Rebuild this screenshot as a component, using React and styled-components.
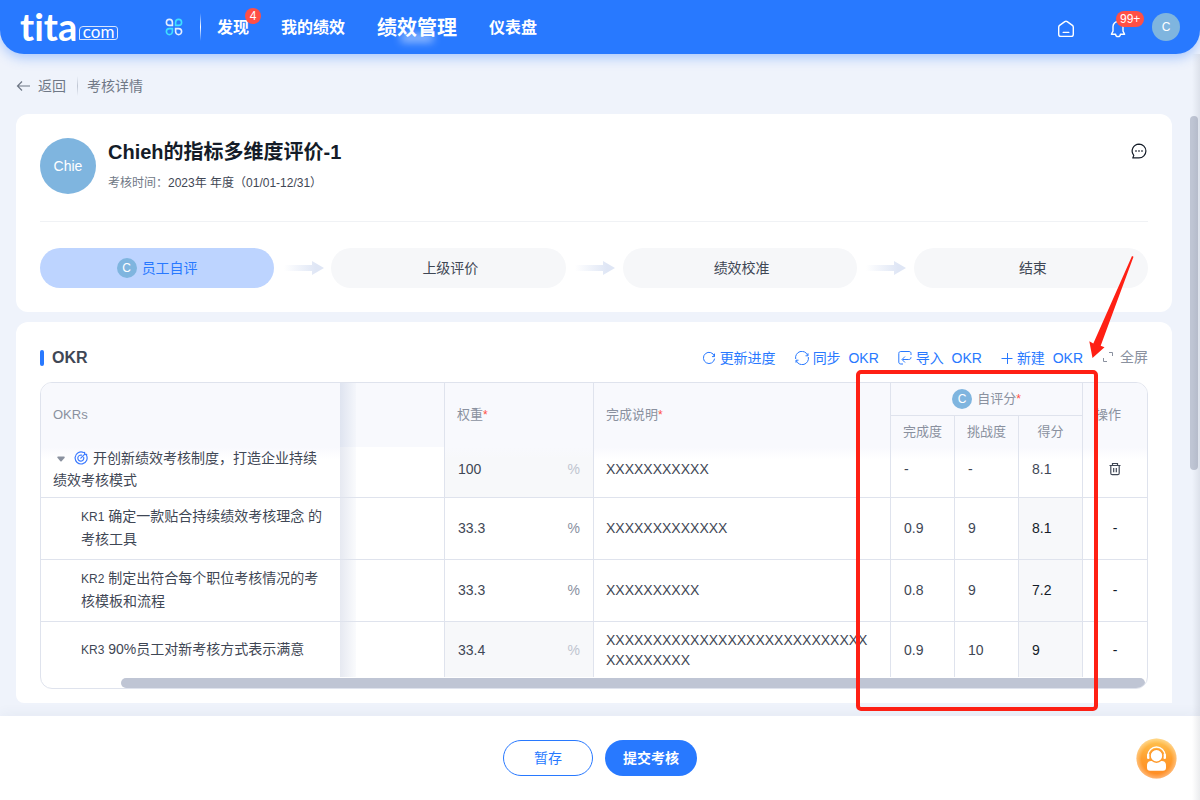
import React from 'react'
import styled, { createGlobalStyle, css } from 'styled-components'

const GlobalStyle = createGlobalStyle`
    * {
        box-sizing: border-box;
    }

    body {
        margin: 0;
        background: #eff3fb;
        color: #3f4755;
        font-family: "Liberation Sans", "Noto Sans CJK SC", sans-serif;
        font-size: 14px;
        line-height: 22px;
    }

    button, input {
        font: inherit;
        color: inherit;
    }

    button {
        padding: 0;
        border: 0;
        background: none;
        cursor: pointer;
    }

    a {
        color: inherit;
        text-decoration: none;
    }

    svg {
        display: block;
        flex: none;
    }
`

const Page = styled.div`
    position: relative;
    min-height: 100vh;
    display: flex;
    flex-direction: column;
`

const EdgeShade = styled.div`
    position: absolute;
    top: 54px;
    right: 0;
    bottom: 0;
    width: 8px;
    background: linear-gradient(to right, rgba(60, 70, 90, 0), rgba(60, 70, 90, 0.1));
    pointer-events: none;
`

const TopBar = styled.header`
    height: 54px;
    padding: 0 20px;
    display: flex;
    align-items: center;
    justify-content: space-between;
    background: #2879ff;
    border-radius: 0 0 24px 24px;
    box-shadow: 0 4px 12px rgba(40, 121, 255, 0.35);
    color: #fff;
    z-index: 1;
`

const Logo = styled.a`
    width: 98px;
    height: 26px;
    margin-right: 47px;
    display: flex;
    align-items: flex-end;
    gap: 2px;
`

const LogoName = styled.span`
    font-family: Lato, sans-serif;
    font-size: 38px;
    font-weight: 700;
    font-variant-ligatures: none;
    line-height: 28px;
`

const LogoDomain = styled.span`
    flex: 1;
    height: 14px;
    border: 1px solid #d5e4ff;
    border-radius: 4px 3px 3px 0;
    font-family: Lato, sans-serif;
    font-size: 17px;
    line-height: 9px;
    text-align: center;
`

const TopGroup = styled.div`
    display: flex;
    align-items: center;
`

const TopDivider = styled.span`
    width: 1px;
    height: 28px;
    margin: 0 16px 0 17px;
    background: linear-gradient(rgba(255, 255, 255, 0), #fff, rgba(255, 255, 255, 0));
`

const Nav = styled.nav`
    padding-top: 2px;
    display: flex;
    align-items: center;
    gap: 32px;
`

const NavLink = styled.a`
    position: relative;
    font-size: ${props => props.$active ? '20px' : '16px'};
    font-weight: 700;
    line-height: 28px;

    ${props => props.$active && css`
        &::after {
            content: "";
            position: absolute;
            left: 24px;
            bottom: 0;
            width: 32px;
            height: 8px;
            background: rgba(255, 255, 255, 0.55);
            filter: blur(4px);
        }
    `}
`

const Badge = styled.span`
    position: absolute;
    left: ${props => props.$left};
    top: -6px;
    min-width: 16px;
    height: 16px;
    padding: 0 4px;
    border-radius: 8px;
    background: #ff4f45;
    color: #fff;
    font-size: 12px;
    font-weight: 400;
    line-height: 16px;
    text-align: center;
`

const TopButton = styled.button`
    position: relative;
    margin-right: ${props => props.$gap};
    padding-top: 3px;
`

const Avatar = styled.span`
    width: ${props => props.$size};
    height: ${props => props.$size};
    flex: none;
    display: inline-flex;
    align-items: center;
    justify-content: center;
    border-radius: 50%;
    background: #7fb5df;
    color: #fff;
    font-size: ${props => props.$font || '12px'};
`

const Main = styled.main`
    position: relative;
    flex: 1;
    padding: 0 28px 12px 16px;
`

const PageThumb = styled.div`
    position: absolute;
    top: 62px;
    right: 2px;
    width: 8px;
    height: 354px;
    border-radius: 4px;
    background: #bfc5d4;
`

const Crumbs = styled.div`
    height: 60px;
    padding-top: 4px;
    display: flex;
    align-items: center;
    color: #6f7886;
`

const BackButton = styled.button`
    display: flex;
    align-items: center;
    gap: 7px;
`

const CrumbDivider = styled.span`
    width: 1px;
    height: 20px;
    margin: 0 9px 0 11px;
    background: linear-gradient(rgba(190, 197, 210, 0), #bec5d2, rgba(190, 197, 210, 0));
`

const Card = styled.section`
    position: relative;
    padding: 24px;
    border-radius: 12px;
    background: #fff;
`

const OkrCard = styled(Card)`
    margin-top: 10px;
    padding: 24px 24px 14px;
    border-radius: 12px 12px 0 8px;
`

const Summary = styled.div`
    height: 84px;
    display: flex;
    align-items: flex-start;
    gap: 12px;
    border-bottom: 1px solid #f0f2f5;
`

const SummaryText = styled.div`
    flex: 1;
`

const Title = styled.h1`
    margin: 0;
    color: #141c28;
    font-size: 20px;
    font-weight: 700;
    line-height: 28px;
`

const Period = styled.div`
    margin-top: 7px;
    font-size: 12px;
    line-height: 20px;

    span {
        color: #6f7886;
    }
`

const CommentButton = styled.button`
    margin-top: 5px;
    color: #141c28;
`

const Steps = styled.div`
    margin-top: 26px;
    display: flex;
    align-items: center;
`

const Step = styled.div`
    flex: 1 1 20px;
    height: 40px;
    padding-left: ${props => props.$active ? '0' : '4px'};
    display: flex;
    align-items: center;
    justify-content: center;
    gap: 5px;
    border-radius: 20px;
    background: ${props => props.$active ? '#bdd4ff' : '#f6f7f9'};
    color: ${props => props.$active ? '#2879ff' : '#3f4755'};
`

const StepArrow = styled.div`
    width: 57px;
    display: flex;
    justify-content: center;
`

const OkrHead = styled.div`
    height: 36px;
    display: flex;
    justify-content: space-between;
`

const OkrTitle = styled.h2`
    margin: 0;
    height: 24px;
    display: flex;
    align-items: center;
    gap: 8px;
    font-size: 16px;
    font-weight: 700;

    &::before {
        content: "";
        width: 4px;
        height: 16px;
        border-radius: 2px;
        background: #2879ff;
    }
`

const Tools = styled.div`
    display: flex;
    align-items: flex-start;
`

const Tool = styled.button`
    height: 22px;
    margin: 1px 19px 0 0;
    display: flex;
    align-items: center;
    gap: 4px;
    color: #2879ff;
    white-space: pre;
`

const FullScreen = styled(Tool)`
    margin: 0;
    gap: 6px;
    color: #8a919f;
`

const TableFrame = styled.div`
    border: 1px solid #dfe3ed;
    border-radius: 12px;
    overflow: hidden;
`

const Table = styled.table`
    width: 100%;
    table-layout: fixed;
    border-collapse: separate;
    border-spacing: 0;
`

const Head = styled.th`
    height: ${props => props.$height || 'auto'};
    padding: 0 12px;
    background: #f8f9fd;
    border-right: ${props => props.$open ? '0' : '1px solid #dfe3ed'};
    border-bottom: ${props => props.$line ? '1px solid #dfe3ed' : '0'};
    color: #8a919f;
    font-size: 13px;
    font-weight: 400;
    text-align: ${props => props.$center ? 'center' : 'left'};

    i {
        color: #ff4f45;
        font-style: normal;
        font-size: 12px;
    }
`

const HeadPerson = styled.span`
    display: flex;
    align-items: center;
    justify-content: center;
    gap: 5px;
`

const ShadeHead = styled(Head)`
    background: linear-gradient(to right, #dfe4f0, #f4f6fb 16px, #f8f9fd 16px);
`

const Row = styled.tr`
    height: ${props => props.$height};

    td {
        padding-bottom: ${props => props.$shift || '2px'};
        border-bottom: ${props => props.$last ? '0' : '1px solid #dfe3ed'};
    }

    td:not(:nth-child(2)) {
        background-image: ${props => props.$fade ? 'linear-gradient(#f8f9fd, rgba(255, 255, 255, 0) 12px)' : 'none'};
    }
`

const Cell = styled.td`
    padding: 0 13px;
    background-color: ${props => props.$muted ? '#f7f8fa' : '#fff'};
    border-right: ${props => props.$open ? '0' : '1px solid #dfe3ed'};
    color: ${props => props.$strong ? '#141c28' : '#3f4755'};
    text-align: ${props => props.$center ? 'center' : 'left'};
    word-break: break-all;
    line-height: 20px;
`

const ShadeCell = styled(Cell)`
    background-image: linear-gradient(to right, #e6e9f1, #fafbfd 16px, #fff 16px);
`

const NoteCell = styled(Cell)`
    padding-left: 12px;
    padding-right: 18px;
`

const ObjectiveCell = styled(Cell)`
    padding-left: 12px;
`

const Objective = styled.div`
    line-height: 22px;

    svg {
        display: inline-block;
        vertical-align: middle;
    }
`

const Caret = styled.button`
    margin: 0 9px 0 4px;
`

const TargetIcon = styled.svg`
    margin: 0 5px 2px 0;
`

const KeyResult = styled.div`
    padding: 0 0 0 27px;
    line-height: 23px;

    small {
        font-size: 12px;
        line-height: 12px;
    }
`

const DeleteButton = styled.button`
    display: block;
    margin: 0 auto;
`

const Field = styled.label`
    display: flex;
    align-items: center;
    color: ${props => props.$muted ? '#bfc5d0' : '#8a919f'};
`

const Input = styled.input`
    display: block;
    flex: 1;
    min-width: 0;
    width: 100%;
    height: 20px;
    padding: 0;
    border: 0;
    outline: 0;
    background: transparent;
    color: #3f4755;
`

const TableBar = styled.div`
    height: 11px;
    padding: 1px 2px 0 80px;

    &::before {
        content: "";
        display: block;
        height: 10px;
        border-radius: 5px;
        background: #bfc5d4;
    }
`

const MarkBox = styled.div`
    position: absolute;
    top: 48px;
    right: 74px;
    width: 242px;
    height: 341px;
    border: 4px solid #ff2014;
    border-radius: 5px;
    pointer-events: none;
`

const MarkArrow = styled.svg`
    position: absolute;
    top: -68px;
    right: 36px;
    pointer-events: none;
`

const Footer = styled.footer`
    position: relative;
    height: 84px;
    display: flex;
    align-items: center;
    justify-content: center;
    gap: 12px;
    background: #fff;
    box-shadow: 0 -2px 12px rgba(60, 80, 120, 0.06);
`

const SaveButton = styled.button`
    width: 90px;
    height: 36px;
    border: 1px solid #2879ff;
    border-radius: 18px;
    color: #2879ff;
`

const SubmitButton = styled.button`
    width: 92px;
    height: 36px;
    border-radius: 18px;
    background: #2879ff;
    color: #fff;
    font-weight: 700;
`

const ServiceButton = styled.button`
    position: absolute;
    right: 23px;
    top: 22px;
`

const steps = ['员工自评', '上级评价', '绩效校准', '结束']

const keyResults = [
    { label: 'KR1', text: '确定一款贴合持续绩效考核理念 的考核工具', weight: '33.3', note: 'XXXXXXXXXXXXX', done: '0.9', challenge: '9', score: '8.1' },
    { label: 'KR2', text: '制定出符合每个职位考核情况的考核模板和流程', weight: '33.3', note: 'XXXXXXXXXX', done: '0.8', challenge: '9', score: '7.2' },
    { label: 'KR3', text: '90%员工对新考核方式表示满意', weight: '33.4', note: 'X'.repeat(37), done: '0.9', challenge: '10', score: '9', locked: true }
]

function AppsIcon() {
    return (
        <svg width="18" height="18" viewBox="0 0 18 18" fill="none" strokeWidth="1.6">
            <path d="M4.4 1.4a3 3 0 0 1 3 3v3h-3a3 3 0 0 1 0-6z" stroke="#e4eeff" />
            <path d="M13.6 1.4a3 3 0 0 0-3 3v3h3a3 3 0 0 0 0-6z" stroke="#3fe0ff" />
            <path d="M4.4 16.6a3 3 0 0 0 3-3v-3h-3a3 3 0 0 0 0 6z" stroke="#3fe0ff" />
            <path d="M13.6 16.6a3 3 0 0 1-3-3v-3h3a3 3 0 0 1 0 6z" stroke="#e4eeff" />
        </svg>
    )
}

function HomeIcon() {
    return (
        <svg width="18" height="18" viewBox="0 0 18 18" fill="none" stroke="#fff" strokeWidth="1.4" strokeLinecap="round" strokeLinejoin="round">
            <path d="M1.7 7.2c0-.8.3-1.3.9-1.8L7.8 1.6c.8-.5 1.6-.5 2.4 0l5.2 3.8c.6.5.9 1 .9 1.8v7c0 1.4-.8 2.2-2.2 2.2H3.9c-1.4 0-2.2-.8-2.2-2.2z" />
            <path d="M6.2 12.4h5.6" />
        </svg>
    )
}

function BellIcon() {
    return (
        <svg width="16" height="18" viewBox="0 0 16 18" fill="none" stroke="#fff" strokeWidth="1.4" strokeLinecap="round" strokeLinejoin="round">
            <path d="M8 1.5a5 5 0 0 0-5 5v4.6L1.4 14.2h4.2a2.4 2.4 0 0 0 4.8 0h4.2L13 11.1V6.5a5 5 0 0 0-5-5z" />
        </svg>
    )
}

function RefreshIcon() {
    return (
        <svg width="14" height="14" viewBox="0 0 14 14" fill="none" stroke="currentColor">
            <path d="M12.4 5.3A5.6 5.6 0 1 0 12.6 7.6" />
            <path d="M12.5 2.6v3H10" />
        </svg>
    )
}

function SyncIcon() {
    return (
        <svg width="14" height="14" viewBox="0 0 14 14" fill="none" stroke="currentColor">
            <path d="M.7 8A6.3 6.3 0 0 1 12.7 4.3M13.3 6A6.3 6.3 0 0 1 1.3 9.7" />
            <path d="M13 2.3v2.5h-2.5M1 11.7V9.2h2.5" />
        </svg>
    )
}

function ImportIcon() {
    return (
        <svg width="14" height="14" viewBox="0 0 14 14" fill="none" stroke="currentColor">
            <path d="M13 4V2.5c0-1.3-.7-2-2-2H2.8c-1.3 0-2 .7-2 2V11c0 1.300.7 2 2 2H5" />
            <path d="M13 6.2c0 1.5-.8 2.3-2.3 2.3H4.500M7 5.500l-3 3 3 3" />
        </svg>
    )
}

function StepArrowIcon({ id }) {
    return (
        <svg width="42" height="14" viewBox="0 0 42 14">
            <defs>
                <linearGradient id={id}>
                    <stop offset="0" stopColor="#dfe6f5" stopOpacity="0" />
                    <stop offset="0.8" stopColor="#dfe6f5" />
                </linearGradient>
            </defs>
            <path d="M2 4h28V0l12 7-12 7v-4H2z" fill={`url(#${id})`} />
        </svg>
    )
}

function ServiceIcon() {
    return (
        <svg width="41" height="41" viewBox="0 0 41 41">
            <defs>
                <linearGradient id="service" x2="0" y2="1">
                    <stop offset="0" stopColor="#ffc552" />
                    <stop offset="0.5" stopColor="#ff9f2e" />
                    <stop offset="1" stopColor="#ff8a24" />
                </linearGradient>
                <radialGradient id="serviceRim">
                    <stop offset="0.75" stopColor="#fff" stopOpacity="0" />
                    <stop offset="1" stopColor="#fff" stopOpacity="0.35" />
                </radialGradient>
            </defs>
            <circle cx="20.5" cy="20.5" r="20" fill="url(#service)" />
            <circle cx="20.5" cy="20.5" r="20" fill="url(#serviceRim)" />
            <path d="M12 18.500v-1a8.500 8.500 0 0 1 17 0v1" fill="none" stroke="#fff" strokeWidth="1.3" />
            <rect x="11" y="15.5" width="2.6" height="5.5" rx="1.3" fill="#fff" />
            <rect x="27.4" y="15.5" width="2.6" height="5.5" rx="1.3" fill="#fff" />
            <path d="M15 23h11c2.600 0 4 2 4 4.500v2.200c0 2-1 3-3 3H14c-2 0-3-1-3-3v-2.200c0-2.500 1.400-4.500 4-4.500z" fill="#fff" />
            <circle cx="20.5" cy="17.8" r="6.4" fill="#fff" stroke="#ff9a2c" strokeWidth="1.4" />
        </svg>
    )
}

function Header() {
    return (
        <TopBar>
            <TopGroup>
                <Logo href="#">
                    <LogoName>tita</LogoName>
                    <LogoDomain>com</LogoDomain>
                </Logo>
                <button aria-label="应用"><AppsIcon /></button>
                <TopDivider />
                <Nav>
                    <NavLink href="#">发现<Badge $left="28px">4</Badge></NavLink>
                    <NavLink href="#">我的绩效</NavLink>
                    <NavLink href="#" $active>绩效管理</NavLink>
                    <NavLink href="#">仪表盘</NavLink>
                </Nav>
            </TopGroup>
            <TopGroup>
                <TopButton $gap="35px" aria-label="首页"><HomeIcon /></TopButton>
                <TopButton $gap="26px" aria-label="通知">
                    <BellIcon />
                    <Badge $left="6px">99+</Badge>
                </TopButton>
                <Avatar $size="28px">C</Avatar>
            </TopGroup>
        </TopBar>
    )
}

function OkrTable() {
    return (
        <TableFrame>
            <Table>
                <colgroup>
                    <col style={{ width: 299 }} />
                    <col style={{ width: 105 }} />
                    <col style={{ width: 149 }} />
                    <col />
                    <col style={{ width: 64 }} />
                    <col style={{ width: 64 }} />
                    <col style={{ width: 64 }} />
                    <col style={{ width: 64 }} />
                </colgroup>
                <thead>
                    <tr>
                        <Head rowSpan="2" $open>OKRs</Head>
                        <ShadeHead rowSpan="2" />
                        <Head rowSpan="2">权重<i>*</i></Head>
                        <Head rowSpan="2">完成说明<i>*</i></Head>
                        <Head colSpan="3" $height="33px" $line $center>
                            <HeadPerson>
                                <Avatar $size="20px">C</Avatar>
                                <span>自评分<i>*</i></span>
                            </HeadPerson>
                        </Head>
                        <Head rowSpan="2" $open>操作</Head>
                    </tr>
                    <tr>
                        <Head $height="31px" $center>完成度</Head>
                        <Head $center>挑战度</Head>
                        <Head $center>得分</Head>
                    </tr>
                </thead>
                <tbody>
                    <Row $height="51px" $shift="6px" $fade>
                        <ObjectiveCell $open>
                            <Objective>
                                <Caret aria-label="收起">
                                    <svg width="8" height="6" viewBox="0 0 8 6"><path d="M1.2.5h5.6q1.2 0 .9 1.2L4.6 5.3q-.6.6-1.2 0L.4 1.7Q0 .5 1.2.5z" fill="#8a919f" /></svg>
                                </Caret>
                                <TargetIcon width="14" height="14" viewBox="0 0 14 14" fill="none" stroke="#3d7bff" strokeWidth="1.2" strokeLinecap="round">
                                    <path d="M12.3 4A6 6 0 1 1 9.5 1.5" />
                                    <path d="M9.7 6.3A3 3 0 1 1 7.6 4.2M6.8 7.2l4-4M10.6 1.3v2.1h2.1" />
                                </TargetIcon>
                                开创新绩效考核制度，打造企业持续绩效考核模式
                            </Objective>
                        </ObjectiveCell>
                        <ShadeCell />
                        <Cell $muted>
                            <Field $muted><Input defaultValue="100" disabled aria-label="权重" />%</Field>
                        </Cell>
                        <NoteCell>XXXXXXXXXXX</NoteCell>
                        <Cell>-</Cell>
                        <Cell>-</Cell>
                        <Cell>8.1</Cell>
                        <Cell $open>
                            <DeleteButton aria-label="删除">
                                <svg width="14" height="14" viewBox="0 0 14 14" fill="none" stroke="#3f4755" strokeWidth="1.2">
                                    <path d="M1.5 3.500h11M4.500 3.300V1.500h5v1.800M2.800 3.500v7.700q0 1.500 1.500 1.500h5.400q1.500 0 1.500-1.500V3.500M5.700 6v4.200M8.300 6v4.200" />
                                </svg>
                            </DeleteButton>
                        </Cell>
                    </Row>
                    {keyResults.map((item, index) => (
                        <Row key={item.label} $height={item.locked ? '55px' : '62px'} $shift={item.locked ? '0' : '2px'} $last={index === keyResults.length - 1}>
                            <Cell $open>
                                <KeyResult><small>{item.label}</small> {item.text}</KeyResult>
                            </Cell>
                            <ShadeCell />
                            <Cell $muted={item.locked}>
                                <Field $muted={item.locked}>
                                    <Input defaultValue={item.weight} disabled={item.locked} aria-label={`${item.label} 权重`} />%
                                </Field>
                            </Cell>
                            <NoteCell>{item.note}</NoteCell>
                            <Cell><Input defaultValue={item.done} aria-label={`${item.label} 完成度`} /></Cell>
                            <Cell><Input defaultValue={item.challenge} aria-label={`${item.label} 挑战度`} /></Cell>
                            <Cell $muted $strong>{item.score}</Cell>
                            <Cell $open $center $strong>-</Cell>
                        </Row>
                    ))}
                </tbody>
            </Table>
            <TableBar />
        </TableFrame>
    )
}

function App() {
    return (
        <Page>
            <GlobalStyle />
            <Header />
            <Main>
                <Crumbs>
                    <BackButton>
                        <svg width="15" height="12" viewBox="0 0 15 12" fill="none" stroke="currentColor" strokeWidth="1.2"><path d="M14 6H1.500M6 1.500L1.500 6 6 10.500" /></svg>
                        返回
                    </BackButton>
                    <CrumbDivider />
                    <span>考核详情</span>
                </Crumbs>
                <Card>
                    <Summary>
                        <Avatar $size="56px" $font="14px">Chie</Avatar>
                        <SummaryText>
                            <Title>Chieh的指标多维度评价-1</Title>
                            <Period><span>考核时间：</span>2023年 年度（01/01-12/31）</Period>
                        </SummaryText>
                        <CommentButton aria-label="评论">
                            <svg width="18" height="16" viewBox="0 0 18 16" fill="none" stroke="currentColor" strokeWidth="1.2">
                                <path d="M9 1.100a6.900 6.900 0 1 1 0 13.800H2.800l1-2.500A6.900 6.900 0 0 1 9 1.100z" strokeLinejoin="round" />
                                <path d="M5.300 8h1.400M8.300 8h1.400M11.300 8h1.400" strokeWidth="1.4" />
                            </svg>
                        </CommentButton>
                    </Summary>
                    <Steps>
                        {steps.map((step, index) => (
                            <React.Fragment key={step}>
                                {index > 0 && <StepArrow><StepArrowIcon id={`arrow${index}`} /></StepArrow>}
                                <Step $active={index === 0}>
                                    {index === 0 && <Avatar $size="20px">C</Avatar>}
                                    {step}
                                </Step>
                            </React.Fragment>
                        ))}
                    </Steps>
                </Card>
                <OkrCard>
                    <OkrHead>
                        <OkrTitle>OKR</OkrTitle>
                        <Tools>
                            <Tool><RefreshIcon />更新进度</Tool>
                            <Tool><SyncIcon />{'同步  OKR'}</Tool>
                            <Tool><ImportIcon />{'导入  OKR'}</Tool>
                            <Tool>
                                <svg width="12" height="12" viewBox="0 0 12 12" stroke="currentColor"><path d="M.5 6.500h11M6.500 1v11" /></svg>
                                {'新建  OKR'}
                            </Tool>
                            <FullScreen>
                                <svg width="12" height="12" viewBox="0 0 12 12" fill="none" stroke="currentColor"><path d="M7 1.500h3.500V5M5 10.500H1.500V7" /></svg>
                                全屏
                            </FullScreen>
                        </Tools>
                    </OkrHead>
                    <OkrTable />
                    <MarkBox />
                    <MarkArrow width="48" height="106" viewBox="0 0 48 106">
                        <path d="M44 2l1.500.8L12.700 91.700l3.800 1.600L4.500 104 1.300 87.300l4 2.200z" fill="#ff2014" />
                    </MarkArrow>
                </OkrCard>
                <PageThumb />
            </Main>
            <Footer>
                <SaveButton>暂存</SaveButton>
                <SubmitButton>提交考核</SubmitButton>
                <ServiceButton aria-label="在线客服"><ServiceIcon /></ServiceButton>
            </Footer>
            <EdgeShade />
        </Page>
    )
}

export default App
